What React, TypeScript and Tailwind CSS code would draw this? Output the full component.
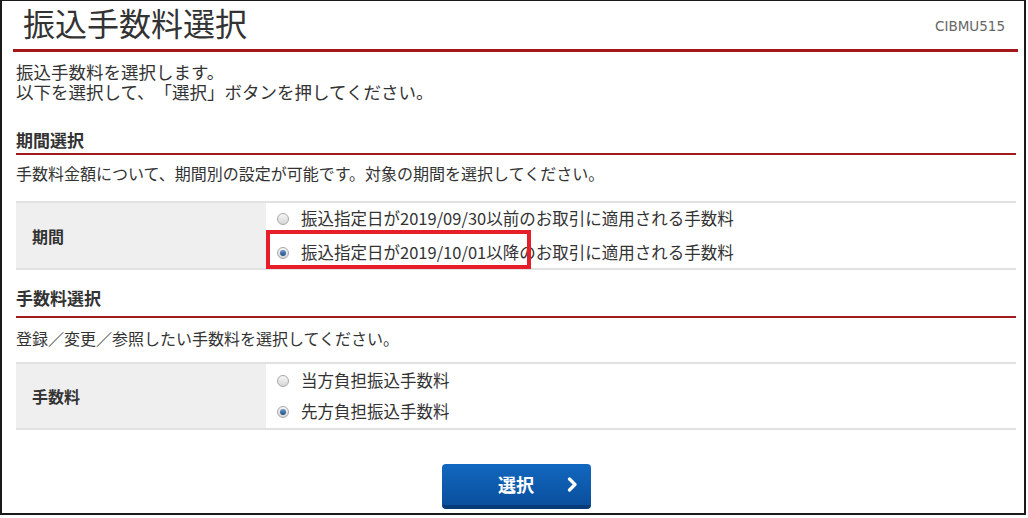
import React from "react";

const jp = "font-['Noto_Sans_CJK_JP',sans-serif] [text-spacing-trim:space-all]";

function Radio({ checked }: { checked?: boolean }) {
  return (
    <span className="flex h-[12px] w-[12px] shrink-0 items-center justify-center rounded-full border border-[#a9a9a9] bg-gradient-to-b from-[#f6f6f6] to-[#d6d6d6]">
      {checked && (
        <span className="h-[6px] w-[6px] rounded-full bg-gradient-to-b from-[#6d97c6] to-[#1f4f86]" />
      )}
    </span>
  );
}

function Option({ label, checked }: { label: string; checked?: boolean }) {
  return (
    <label className="flex h-[24px] items-center">
      <Radio checked={checked} />
      <span className="ml-[12px] text-[16.5px] text-[#333]">{label}</span>
    </label>
  );
}

function Heading({ text, className }: { text: string; className?: string }) {
  return (
    <h2
      className={`border-b-2 border-[#a11a1c] text-[17px] font-bold leading-[24px] text-[#333] ${className ?? ""}`}
    >
      {text}
    </h2>
  );
}

function Row({
  label,
  options,
  gap,
  height,
}: {
  label: string;
  options: { text: string; checked?: boolean }[];
  gap: string;
  height: string;
}) {
  return (
    <div className={`flex border-y-2 border-[#e1e1e1] ${height}`}>
      <div className="flex w-[250px] items-center bg-[#efefef] pl-[16px] text-[16px] font-bold text-[#333]">
        {label}
      </div>
      <div className={`flex flex-1 flex-col justify-center pl-[11px] ${gap}`}>
        {options.map((o) => (
          <Option key={o.text} label={o.text} checked={o.checked} />
        ))}
      </div>
    </div>
  );
}

export default function App() {
  return (
    <div
      className={`relative h-[515px] w-[1026px] overflow-hidden border-x-2 border-t border-b-2 border-[#1a1a1a] bg-white ${jp}`}
    >
      {/* header */}
      <div className="flex h-[48px] items-start justify-between">
        <h1 className="pl-[21px] pt-[1px] text-[32px] font-normal leading-[40px] text-[#333]">
          振込手数料選択
        </h1>
        <span className="pr-[19px] pt-[15px] font-['DejaVu_Sans',sans-serif] text-[13.5px] leading-[20px] text-[#666]">
          CIBMU515
        </span>
      </div>
      <div className="ml-[11px] mr-[6px] h-[3px] bg-[#a3171a]" />

      <div className="pl-[14px] pr-[8px]">
        <p className="mt-[10px] text-[17.5px] leading-[20px] text-[#333]">
          振込手数料を選択します。
          <br />
          以下を選択して、「選択」ボタンを押してください。
        </p>

        <Heading text="期間選択" className="mt-[26px] pb-[1px]" />
        <p className="mt-[6px] text-[16px] leading-[24px] text-[#333]">
          手数料金額について、期間別の設定が可能です。対象の期間を選択してください。
        </p>

        <div className="mt-[16px]">
          <Row
            label="期間"
            gap="gap-[10px]"
            height="h-[69px]"
            options={[
              { text: "振込指定日が2019/09/30以前のお取引に適用される手数料" },
              { text: "振込指定日が2019/10/01以降のお取引に適用される手数料", checked: true },
            ]}
          />
        </div>

        <Heading text="手数料選択" className="mt-[16px] pb-[6px]" />
        <p className="mt-[8px] text-[16px] leading-[24px] text-[#333]">
          登録／変更／参照したい手数料を選択してください。
        </p>

        <div className="mt-[12px]">
          <Row
            label="手数料"
            gap="gap-[7px]"
            height="h-[68px]"
            options={[
              { text: "当方負担振込手数料" },
              { text: "先方負担振込手数料", checked: true },
            ]}
          />
        </div>

        <div className="mt-[34px] flex justify-center">
          <button className="relative flex h-[45px] w-[149px] items-center justify-center rounded-[4px] border-b-[4px] border-[#073c78] bg-gradient-to-b from-[#1268c0] to-[#0a4f9d] text-[18px] font-bold text-white">
            選択
            <svg
              className="absolute right-[13px] top-[13px]"
              width="11"
              height="15"
              viewBox="0 0 11 15"
            >
              <polyline
                points="2.5,2 8,7.5 2.5,13"
                fill="none"
                stroke="white"
                strokeWidth="3.2"
                strokeLinecap="round"
                strokeLinejoin="round"
              />
            </svg>
          </button>
        </div>
      </div>

      {/* annotation highlight */}
      <div className="absolute left-[264px] top-[229px] h-[39px] w-[265px] border-4 border-[#e61e2a]" />
    </div>
  );
}
